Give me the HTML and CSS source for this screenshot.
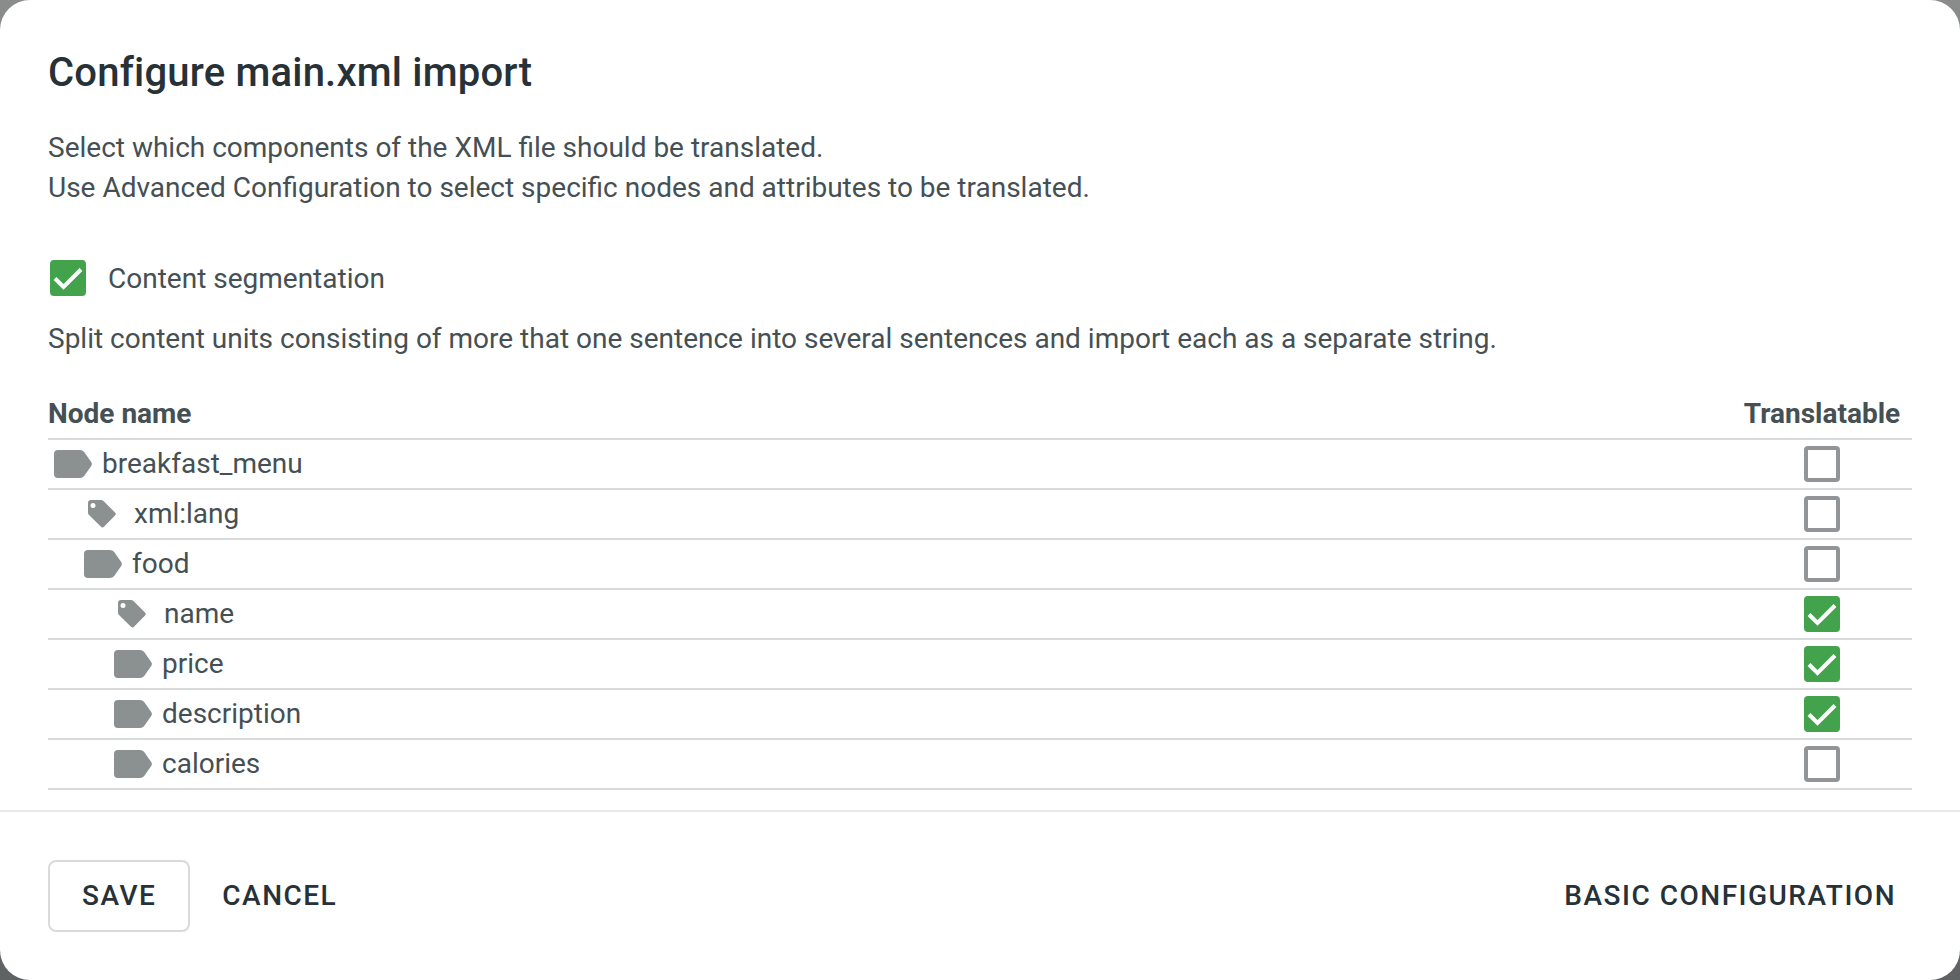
FILE: index.html
```html
<!DOCTYPE html>
<html lang="en">
<head>
<meta charset="utf-8">
<title>Configure main.xml import</title>
<link rel="stylesheet" href="styles.css">
</head>
<body>
<svg class="defs" width="0" height="0" aria-hidden="true">
  <symbol id="node" viewBox="0 0 38 28"><path d="M4 0H26Q28.500 0 30 1.800L37.200 12Q38.600 14 37.200 16L30 26.200Q28.500 28 26 28H4Q0 28 0 24V4Q0 0 4 0Z"/></symbol>
  <symbol id="attr" viewBox="0 0 28 28"><path fill-rule="evenodd" d="M3 0H13Q14.500 0 15.500 1L27 12.500Q28.500 14 27 15.500L16 26.800Q14.500 28.300 13 26.800L1 15Q0 14 0 12.500V3Q0 0 3 0ZM5 3A2.500 2.500 0 1 0 5 8A2.500 2.500 0 1 0 5 3Z"/></symbol>
  <symbol id="tick" viewBox="0 0 36 36"><path d="M5 18.500L13.500 27L31 9.500" fill="none" stroke="#fff" stroke-width="4"/></symbol>
</svg>
<main class="dialog">
  <div class="content">
    <h1 class="title">Configure main.xml import</h1>
    <p class="intro">Select which components of the XML file should be translated.<br>Use Advanced Configuration to select specific nodes and attributes to be translated.</p>
    <label class="option">
      <span class="box on"><svg class="tick"><use href="#tick"/></svg></span>
      <span>Content segmentation</span>
    </label>
    <p class="hint">Split content units consisting of more that one sentence into several sentences and import each as a separate string.</p>
    <div class="table">
      <div class="row head"><span class="name">Node name</span><span class="col">Translatable</span></div>
      <div class="row"><span class="name l0"><svg class="i-node"><use href="#node"/></svg>breakfast_menu</span><span class="col"><span class="box"></span></span></div>
      <div class="row"><span class="name l1a"><svg class="i-attr"><use href="#attr"/></svg>xml:lang</span><span class="col"><span class="box"></span></span></div>
      <div class="row"><span class="name l1"><svg class="i-node"><use href="#node"/></svg>food</span><span class="col"><span class="box"></span></span></div>
      <div class="row"><span class="name l2a"><svg class="i-attr"><use href="#attr"/></svg>name</span><span class="col"><span class="box on"><svg class="tick"><use href="#tick"/></svg></span></span></div>
      <div class="row"><span class="name l2"><svg class="i-node"><use href="#node"/></svg>price</span><span class="col"><span class="box on"><svg class="tick"><use href="#tick"/></svg></span></span></div>
      <div class="row"><span class="name l2"><svg class="i-node"><use href="#node"/></svg>description</span><span class="col"><span class="box on"><svg class="tick"><use href="#tick"/></svg></span></span></div>
      <div class="row"><span class="name l2"><svg class="i-node"><use href="#node"/></svg>calories</span><span class="col"><span class="box"></span></span></div>
    </div>
  </div>
  <footer class="footer">
    <button class="btn outlined">SAVE</button>
    <button class="btn">CANCEL</button>
    <button class="btn end">BASIC CONFIGURATION</button>
  </footer>
</main>
</body>
</html>
```
FILE: styles.css
```css
* { box-sizing: border-box; }
html, body { margin: 0; height: 100%; }
body {
  background: linear-gradient(180deg, #8a8c8c 0%, #5f6363 100%);
  font-family: Roboto, "Liberation Sans", sans-serif;
  color: #455054;
  overflow: hidden;
}
.defs { position: absolute; }
.dialog {
  height: 980px;
  background: #fff;
  border-radius: 30px;
  display: flex;
  flex-direction: column;
}
.content {
  padding: 48px 48px 0;
  height: 812px;
  border-bottom: 2px solid #e6e7e7;
}
.title {
  margin: 0;
  font-size: 40px;
  line-height: 50px;
  font-weight: 500;
  color: #263238;
  letter-spacing: 0.2px;
}
.intro {
  margin: 30px 0 0;
  font-size: 28px;
  line-height: 40px;
}
.option {
  display: flex;
  align-items: center;
  gap: 22px;
  margin-top: 45px;
  height: 50px;
  font-size: 28px;
  padding-left: 2px;
}
.hint {
  margin: 16px 0 0;
  font-size: 28px;
  line-height: 40px;
}
.box {
  display: block;
  width: 36px;
  height: 36px;
  border: 4px solid #919597;
  border-radius: 4px;
  flex: none;
  position: relative;
}
.box.on {
  background: #43a34c;
  border: 0;
}
.tick { display: block; width: 36px; height: 36px; }
.table { margin-top: 32px; }
.row {
  display: flex;
  align-items: center;
  justify-content: space-between;
  height: 50px;
  border-bottom: 2px solid #d9dadb;
  font-size: 28px;
}
.head { height: 49px; padding-bottom: 2px; font-weight: 700; font-size: 28px; }
.name { display: flex; align-items: center; line-height: 32px; }
.col { width: 156px; margin-right: 12px; display: flex; justify-content: center; white-space: nowrap; }
.i-node { width: 38px; height: 28px; margin-right: 10px; fill: #8b9091; }
.i-attr { width: 28px; height: 28px; margin-right: 18px; fill: #8b9091; }
.l0 { padding-left: 6px; }
.l1 { padding-left: 36px; }
.l2 { padding-left: 66px; }
.l1a { padding-left: 40px; }
.l2a { padding-left: 70px; }
.footer {
  flex: 1;
  display: flex;
  align-items: center;
  padding: 0 48px;
}
.btn {
  height: 72px;
  padding: 0 32px 2px;
  background: none;
  border: 0;
  border-radius: 8px;
  font-family: inherit;
  font-size: 28px;
  font-weight: 500;
  letter-spacing: 1.5px;
  color: #263238;
}
.outlined { border: 2px solid #d9dadb; }
.end { margin-left: auto; padding-right: 16px; }
```
